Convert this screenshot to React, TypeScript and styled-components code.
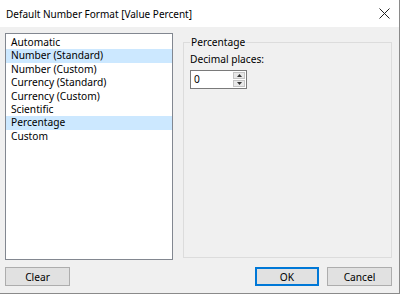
import React from "react";
import styled, { createGlobalStyle } from "styled-components";

const Global = createGlobalStyle`
  html, body { margin: 0; padding: 0; background: #f0f0f0; }
  body { font-family: "Noto Sans", "Open Sans", sans-serif; font-size: 10.2px; color: #000; }
  * { box-sizing: border-box; }
`;

const Window = styled.div`
  width: 400px;
  height: 294px;
  display: flex;
  flex-direction: column;
  background: #f0f0f0;
  border-right: 1px solid #8a8a8a;
  border-bottom: 1px solid #8a8a8a;
  overflow: hidden;
`;

const TitleBar = styled.div`
  height: 27px;
  flex: none;
  background: #fff;
  display: flex;
  align-items: center;
  justify-content: space-between;
  padding: 0 9px 0 6px;
`;

const Title = styled.span`
  font-size: 10px;
  color: #000;
`;

const Close = styled.svg`
  width: 11px;
  height: 11px;
`;

const Body = styled.div`
  flex: 1;
  display: grid;
  grid-template-columns: 168px 209px;
  grid-template-rows: 227px auto;
  column-gap: 10px;
  padding: 6px 7px 0 5px;
`;

const ListBox = styled.div`
  background: #fff;
  border: 1px solid #828790;
  padding: 2px 0 1px;
  display: flex;
  flex-direction: column;
`;

const Item = styled.div<{ $selected?: boolean }>`
  height: 13.4px;
  line-height: 13.4px;
  padding-left: 5px;
  background: ${(p) => (p.$selected ? "#cce8ff" : "transparent")};
  white-space: nowrap;
`;

const Group = styled.fieldset`
  margin: 3px 0 2px 0;
  border: 1px solid #dcdcdc;
  border-radius: 0;
  padding: 2px 6px 0 6px;
  display: flex;
  flex-direction: column;
  min-width: 0;
`;

const Legend = styled.legend`
  padding: 0 1px;
  margin-left: 0;
  line-height: 12px;
`;

const Label = styled.div`
  margin-top: 3px;
  line-height: 13px;
`;

const Spin = styled.div`
  margin-top: 4px;
  width: 57px;
  height: 19px;
  background: #fff;
  border: 1px solid #7a7a7a;
  display: flex;
  align-items: stretch;
`;

const SpinValue = styled.div`
  flex: 1;
  padding-left: 3px;
  line-height: 17px;
`;

const SpinButtons = styled.div`
  width: 13px;
  display: flex;
  flex-direction: column;
  padding: 1px 1px 1px 0;
  gap: 1px;
`;

const SpinButton = styled.div`
  flex: 1;
  background: #e8e8e8;
  border: 1px solid #c4c4c4;
  display: flex;
  align-items: center;
  justify-content: center;
`;

const Arrow = styled.svg`
  width: 5px;
  height: 3px;
`;

const Footer = styled.div`
  grid-column: 1 / -1;
  display: flex;
  align-items: flex-start;
  padding-top: 7px;
`;

const Button = styled.button<{ $default?: boolean }>`
  width: ${(p) => (p.$default ? "64px" : "65px")};
  height: 19px;
  padding: 0;
  font-family: inherit;
  font-size: 10.2px;
  color: #000;
  background: #e1e1e1;
  border: 1px solid ${(p) => (p.$default ? "#0078d7" : "#adadad")};
  box-shadow: ${(p) => (p.$default ? "inset 0 0 0 1px #0078d7" : "none")};
`;

const Spacer = styled.div`
  flex: 1;
`;

const ButtonGap = styled.div`
  width: 8px;
`;

const items = [
  "Automatic",
  "Number (Standard)",
  "Number (Custom)",
  "Currency (Standard)",
  "Currency (Custom)",
  "Scientific",
  "Percentage",
  "Custom",
];
const selected = new Set([1, 6]);

export default function App() {
  return (
    <>
      <Global />
      <Window>
        <TitleBar>
          <Title>Default Number Format [Value Percent]</Title>
          <Close viewBox="0 0 11 11">
            <path d="M0.5 0.5 L10.5 10.5 M10.5 0.5 L0.5 10.5" stroke="#222" strokeWidth="1" fill="none" />
          </Close>
        </TitleBar>
        <Body>
          <ListBox>
            {items.map((t, i) => (
              <Item key={t} $selected={selected.has(i)}>
                {t}
              </Item>
            ))}
          </ListBox>
          <Group>
            <Legend>Percentage</Legend>
            <Label>Decimal places:</Label>
            <Spin>
              <SpinValue>0</SpinValue>
              <SpinButtons>
                <SpinButton>
                  <Arrow viewBox="0 0 5 3">
                    <path d="M2.5 0 L5 3 L0 3 Z" fill="#333" />
                  </Arrow>
                </SpinButton>
                <SpinButton>
                  <Arrow viewBox="0 0 5 3">
                    <path d="M0 0 L5 0 L2.5 3 Z" fill="#333" />
                  </Arrow>
                </SpinButton>
              </SpinButtons>
            </Spin>
          </Group>
          <Footer>
            <Button>Clear</Button>
            <Spacer />
            <Button $default>OK</Button>
            <ButtonGap />
            <Button>Cancel</Button>
          </Footer>
        </Body>
      </Window>
    </>
  );
}
